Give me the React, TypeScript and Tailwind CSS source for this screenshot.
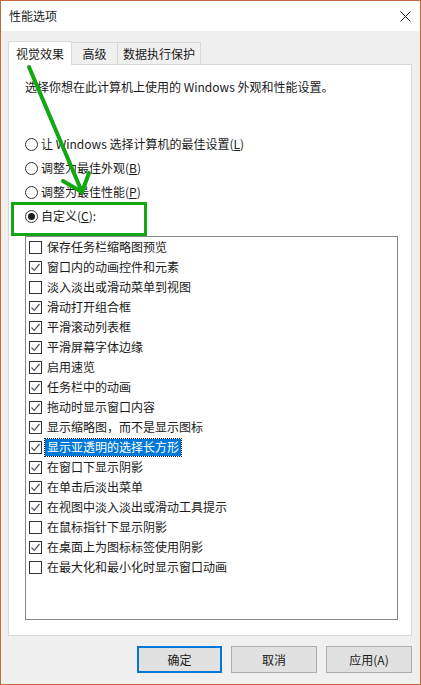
import React from "react";

const font = { fontFamily: '"Noto Sans CJK SC", "Noto Sans", sans-serif' };

const effects: [string, boolean][] = [
  ["保存任务栏缩略图预览", false],
  ["窗口内的动画控件和元素", true],
  ["淡入淡出或滑动菜单到视图", false],
  ["滑动打开组合框", true],
  ["平滑滚动列表框", true],
  ["平滑屏幕字体边缘", true],
  ["启用速览", true],
  ["任务栏中的动画", true],
  ["拖动时显示窗口内容", true],
  ["显示缩略图，而不是显示图标", true],
  ["显示亚透明的选择长方形", true],
  ["在窗口下显示阴影", true],
  ["在单击后淡出菜单", true],
  ["在视图中淡入淡出或滑动工具提示", true],
  ["在鼠标指针下显示阴影", false],
  ["在桌面上为图标标签使用阴影", true],
  ["在最大化和最小化时显示窗口动画", false],
];

const Radio = ({ label, checked }: { label: React.ReactNode; checked?: boolean }) => (
  <div className="flex items-center h-[24px] shrink-0">
    <span className="w-[13px] h-[13px] rounded-full border border-[#333] bg-white flex items-center justify-center">
      {checked && <span className="w-[7px] h-[7px] rounded-full bg-[#1a1a1a]" />}
    </span>
    <span className="ml-[3px] text-[12px] leading-[16px] text-[#1a1a1a]">{label}</span>
  </div>
);

const Check = ({ on }: { on: boolean }) => (
  <span className="w-[13px] h-[13px] border border-[#333] bg-white flex items-center justify-center shrink-0">
    {on && (
      <svg width="11" height="11" viewBox="0 0 11 11">
        <polyline points="1.5,5.5 4.2,8.3 9.5,2" fill="none" stroke="#555" strokeWidth="1.2" />
      </svg>
    )}
  </span>
);

const App = () => {
  return (
    <div className="relative w-[421px] h-[685px] border border-[#c3693c] bg-[#f0f0f0] flex flex-col overflow-hidden" style={font}>
      {/* title bar */}
      <div className="h-[30px] bg-white flex items-center justify-between pl-[8px] pr-[9px] shrink-0">
        <span className="text-[12px] text-[#1a1a1a]">性能选项</span>
        <svg width="11" height="11" viewBox="0 0 11 11">
          <path d="M0.5 0.5 L10.5 10.5 M10.5 0.5 L0.5 10.5" stroke="#1a1a1a" strokeWidth="1" />
        </svg>
      </div>

      <div className="px-[7px] pt-[9px]">
        {/* tabs */}
        <div className="flex items-end h-[24px]">
          <div className="h-[24px] w-[64px] bg-white border border-b-0 border-[#d9d9d9] flex items-center justify-center text-[12px] text-[#1a1a1a] relative z-10 -mb-px">
            视觉效果
          </div>
          <div className="h-[22px] w-[46px] border border-l-0 border-b-0 border-[#d9d9d9] flex items-center justify-center text-[12px] text-[#1a1a1a]">
            高级
          </div>
          <div className="h-[22px] w-[83px] border border-l-0 border-b-0 border-[#d9d9d9] flex items-center justify-center text-[12px] text-[#1a1a1a]">
            数据执行保护
          </div>
        </div>

        {/* panel */}
        <div className="bg-white border border-[#d9d9d9] h-[572px] w-[404px] pl-[16px] pr-[13px]">
          <p className="text-[12px] text-[#1a1a1a] mt-[14px] leading-[16px]">
            选择你想在此计算机上使用的 Windows 外观和性能设置。
          </p>
          <div className="mt-[37px] flex flex-col">
            <Radio label={<>让 Windows 选择计算机的最佳设置(<u>L</u>)</>} />
            <Radio label={<>调整为最佳外观(<u>B</u>)</>} />
            <Radio label={<>调整为最佳性能(<u>P</u>)</>} />
            <Radio label={<>自定义(<u>C</u>):</>} checked />
          </div>
          <div className="mt-[8px] h-[384px] w-[373px] border border-[#828790] bg-white flex flex-col">
            {effects.map(([label, on], i) => (
              <div key={label} className="h-[20px] flex items-center pl-[3px] shrink-0">
                <Check on={on} />
                {i === 10 ? (
                  <span className="ml-[3px] h-[17px] px-[2px] flex items-center bg-[#0078d7] text-white text-[12px] outline outline-1 outline-dotted outline-[#1a1a1a]">
                    {label}
                  </span>
                ) : (
                  <span className="ml-[5px] text-[12px] text-[#1a1a1a]">{label}</span>
                )}
              </div>
            ))}
          </div>
        </div>

        {/* buttons */}
        <div className="flex justify-end gap-[9px] mt-[10px] pr-[1px]">
          <button className="w-[85px] h-[27px] bg-[#e1e1e1] border-2 border-[#0078d7] text-[12px] text-[#1a1a1a]">确定</button>
          <button className="w-[86px] h-[27px] bg-[#e1e1e1] border border-[#adadad] text-[12px] text-[#1a1a1a]">取消</button>
          <button className="w-[86px] h-[27px] bg-[#e1e1e1] border border-[#adadad] text-[12px] text-[#1a1a1a]">应用(A)</button>
        </div>
      </div>

      {/* annotation: green box */}
      <div className="absolute left-[10px] top-[201px] w-[136px] h-[34px] border-[3px] border-[#12a812] pointer-events-none" />

      {/* annotation: green arrow */}
      <svg className="absolute left-0 top-0 pointer-events-none" width="421" height="685">
        <g stroke="#12a812" strokeWidth="4" strokeLinecap="round" fill="none">
          <line x1="28" y1="66" x2="81" y2="191" />
          <line x1="62" y1="180" x2="81" y2="191" />
          <line x1="88" y1="172" x2="81" y2="191" />
        </g>
      </svg>
    </div>
  );
};

export default App;
